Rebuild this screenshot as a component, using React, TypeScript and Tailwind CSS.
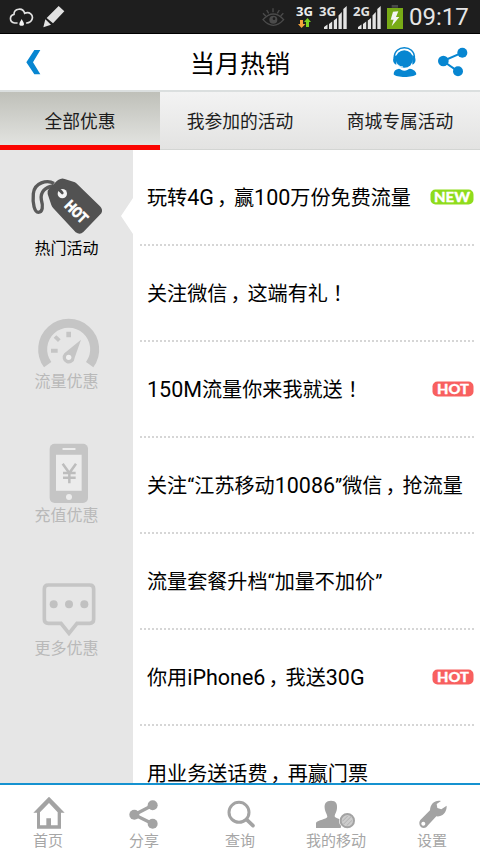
import React from "react";

const tabs = ["全部优惠", "我参加的活动", "商城专属活动"];

const offers = [
  { title: "玩转4G，赢100万份免费流量", tag: "NEW" },
  { title: "关注微信，这端有礼！" },
  { title: "150M流量你来我就送！", tag: "HOT" },
  { title: "关注“江苏移动10086”微信，抢流量" },
  { title: "流量套餐升档“加量不加价”" },
  { title: "你用iPhone6，我送30G", tag: "HOT" },
  { title: "用业务送话费，再赢门票" },
];

// Full-width punctuation sits near the middle of its cell, latin runs are a bit larger
function OfferTitle({ text }: { text: string }) {
  return (
    <span className="whitespace-nowrap text-[20.1px] leading-5 text-black">
      {text.split(/([，！]|[A-Za-z0-9]+)/).map((part, i) => {
        if (part === "，") {
          return <span key={i} className="-mr-[3px] pl-[3px]">{part}</span>;
        }
        if (part === "！") {
          return <span key={i} className="pl-[5px]">{part}</span>;
        }
        if (/^[A-Za-z0-9]+$/.test(part)) {
          return <span key={i} className="text-[21.5px] leading-5">{part}</span>;
        }
        return part;
      })}
    </span>
  );
}

function Badge({ tag }: { tag: string }) {
  const isNew = tag === "NEW";
  return (
    <svg
      width={isNew ? 44 : 42}
      height="16"
      viewBox={isNew ? "0 0 44 16" : "0 0 42 16"}
      className="absolute right-0 top-[39px]"
    >
      <rect x="0.5" y="0.5" width={isNew ? 43 : 41} height="15" rx="5" fill={isNew ? "#8fdc1c" : "#f8605f"} />
      <text
        x={isNew ? 22 : 21}
        y="12.500"
        textAnchor="middle"
        textLength={isNew ? 36 : 32}
        lengthAdjust="spacingAndGlyphs"
        fontFamily="Lato, sans-serif"
        fontWeight="900"
        fontSize="13"
        fill="#fff"
        stroke="#fff"
        strokeWidth="0.300"
        strokeLinejoin="round"
      >
        {tag}
      </text>
    </svg>
  );
}

function Signal({ label }: { label: string }) {
  return (
    <svg width="29" height="26" viewBox="0 0 29 26" className="ml-[5px] mt-[3px]">
      <g fill="#e4e4e4">
        <path d="M5 26v-2l3.500-2.500V26zM10 26v-5l3.200-2.500V26zM14.800 26v-8.500l3.200-2.500V26zM19.500 26V12.500L22.800 9V26zM24.300 26V6l3.400-3V26z" />
      </g>
      <text
        x="0"
        y="13"
        fontFamily="Open Sans, sans-serif"
        fontWeight="700"
        fontSize="12.500"
        fill="#e2e2e2"
        stroke="#1e1e1e"
        strokeWidth="1.500"
        paintOrder="stroke"
        textLength="17"
        lengthAdjust="spacingAndGlyphs"
      >
        {label}
      </text>
    </svg>
  );
}

function StatusBar() {
  return (
    <div className="flex h-[34px] items-start border-b border-black bg-[#1e1e1e]">
      <svg width="25" height="20" viewBox="27 21 75 60" className="ml-[9px] mt-[7px]">
        <path
          d="M51 69H44C27 67 28 46 42 43C42 25 69 21 74 40C88 33 101 45 96 58C93 66 88 68 80 69"
          fill="none"
          stroke="#e2e2e2"
          strokeWidth="5"
          strokeLinecap="round"
        />
        <path d="M65 57C62 64 58 67 58 73C58 79 72 79 72 73C72 67 68 64 65 57Z" fill="#f2f2f2" />
      </svg>
      <svg width="22" height="22" viewBox="129 18 66 66" className="ml-[9px] mt-[6px]">
        <path d="M176 18L193 34L159 70L140 54ZM136 58L153 74L130 82Z" fill="#e2e2e2" />
      </svg>
      <div className="flex-1" />
      <svg width="23" height="20" viewBox="63 24 69 60" className="mr-[2px] mt-[8px]">
        <g fill="none" stroke="#4b4b4b" strokeWidth="4">
          <path d="M66 59Q97 25 128 59Q97 93 66 59Z" />
          <path d="M96 25v12M77 30l6 10M115 30l-6 10M66 40l8 8M127 40l-8 8" />
        </g>
        <circle cx="97" cy="59" r="12" fill="#4b4b4b" />
        <circle cx="99" cy="56" r="4" fill="#1e1e1e" />
      </svg>
      <svg width="18" height="26" viewBox="0 0 18 26" className="ml-[9px] mt-[3px]">
        <text x="0" y="13" fontFamily="Open Sans, sans-serif" fontWeight="700" fontSize="12.500" fill="#eee" textLength="17" lengthAdjust="spacingAndGlyphs">
          3G
        </text>
        <path d="M4 17h3v4h2.500L5.500 25L2 21h2z" fill="#f5a33a" />
        <path d="M10 24h3v-5h2L11.500 15L8 19h2z" fill="#7ed321" />
      </svg>
      <Signal label="3G" />
      <Signal label="2G" />
      <svg width="18" height="25" viewBox="438 15 54 75" className="ml-[4px] mt-[5px]">
        <path d="M455 15h19v8h-19z" fill="#484848" />
        <path d="M441 24h48v63h-48z" fill="#78ab16" />
        <path d="M459 35l16-1-7 17h10L455 79l6-20h-9z" fill="#f4f4f4" />
      </svg>
      <span className="ml-[5px] mr-[11px] mt-[3px] w-[60px] whitespace-nowrap font-[Roboto,sans-serif] text-[24px] leading-7 text-[#e6e6e6]">
        09:17
      </span>
    </div>
  );
}

function Header() {
  return (
    <div className="grid h-[58px] grid-cols-[1fr_auto_1fr] items-center border-b-2 border-[#dbdfdf] bg-white">
      <div className="flex pl-[26px]">
        <svg width="15" height="25" viewBox="78 150 45 75">
          <path d="M103 150h18L99 187l22 36h-18L79 187z" fill="#0786d1" />
        </svg>
      </div>
      <h1 className="mt-1.5 text-[25px] leading-8 text-black">当月热销</h1>
      <div className="flex items-center justify-end pr-[12px]">
        <svg width="25" height="31" viewBox="456 141 75 93" className="mr-[21px]">
          <path d="M463 174C461 133 525 133 523 174" fill="none" stroke="#0786d1" strokeWidth="4.500" />
          <circle cx="493" cy="177" r="26" fill="#0786d1" />
          <path d="M469 166C456 169 456 191 469 194ZM517 166C530 169 530 191 517 194Z" fill="#0786d1" />
          <path d="M477 206C483 207 486 212 493 212C500 212 504 207 509 206C522 208 529 215 529 223C519 234 469 234 461 223C461 213 466 208 477 206Z" fill="#0786d1" />
          <path d="M473 194Q480 202 489 201" fill="none" stroke="#fff" strokeWidth="3" />
        </svg>
        <svg width="30" height="30" viewBox="594 144 90 90">
          <path d="M667 161L609 186L654 217" fill="none" stroke="#0786d1" strokeWidth="6" />
          <g fill="#0786d1">
            <circle cx="667" cy="161" r="15" />
            <circle cx="610" cy="186" r="16" />
            <circle cx="654" cy="217" r="15" />
          </g>
        </svg>
      </div>
    </div>
  );
}

function TabBar() {
  return (
    <div className="grid h-[58px] grid-cols-3 text-[17.8px] text-[#1c1c1c]">
      {tabs.map((tab, i) => (
        <div
          key={tab}
          className={
            i === 0
              ? "flex items-center justify-center border-b-[5px] border-[#fb0500] bg-linear-to-b from-[#bfc0b9] to-[#e2e3e0] pt-2"
              : "flex items-center justify-center border-b border-[#d3d5d3] bg-linear-to-b from-[#f3f3f3] to-[#e3e3e2] pt-1"
          }
        >
          {tab}
        </div>
      ))}
    </div>
  );
}

function HotTagIcon() {
  return (
    <svg width="77" height="62" viewBox="84 42 231 186">
      <path d="M162 70C141 58 103 68 100 101C97 132 104 157 115 157C128 157 130 139 124 119C120 96 137 80 160 78" fill="none" stroke="#5a5a5a" strokeWidth="10" />
      <path
        d="M181 57Q187 54 194 57L220 65Q225 66 229 70L300 139Q310 149 304 160L250 216Q240 226 227 217L160 145Q156 141 154 135L143 102Q140 94 146 88L168 65Q174 59 181 57Z"
        fill="#525252"
      />
      <circle cx="187" cy="101" r="14" fill="#f4f4f4" />
      <path d="M166 86Q180 88 187 99" fill="none" stroke="#525252" strokeWidth="8" strokeLinecap="round" />
      <text
        transform="translate(205 126) rotate(45)"
        x="0"
        y="19"
        fontFamily="Roboto, sans-serif"
        fontWeight="700"
        fontSize="44"
        fill="#fff"
        stroke="#fff"
        strokeWidth="2"
        textLength="76"
        lengthAdjust="spacingAndGlyphs"
      >
        HOT
      </text>
    </svg>
  );
}

function GaugeIcon() {
  return (
    <svg width="77" height="62" viewBox="84 22 231 186">
      <path d="M143 195A78 78 0 1 1 269 195" fill="none" stroke="#c5c5c5" strokeWidth="27" />
      <path d="M199 96h14v17h-14zM153 147h20v12h-20zM169 107l13 12-8 8-13-13z" fill="#c5c5c5" />
      <path d="M243 120L224 174A18 18 0 1 1 193 161Z" fill="#c5c5c5" />
      <circle cx="206" cy="173" r="8" fill="#efefef" />
    </svg>
  );
}

function PhoneIcon() {
  return (
    <svg width="77" height="62" viewBox="84 32 231 186">
      <rect x="149" y="40" width="115" height="178" rx="15" fill="#c5c5c5" />
      <path d="M168 73h77v108h-77z" fill="#ececec" />
      <path d="M190 56h34" stroke="#ececec" strokeWidth="6" strokeLinecap="round" />
      <circle cx="207" cy="200" r="9" fill="#ececec" />
      <path d="M188 100l20 28 20-28M189 128h38M189 142h38M208 128v31" fill="none" stroke="#bdbdbd" strokeWidth="7.500" />
    </svg>
  );
}

function BubbleIcon() {
  return (
    <svg width="77" height="62" viewBox="84 12 231 186">
      <path d="M145 45H269Q281 45 281 57V148Q281 160 269 160H231L207 190L183 160H145Q133 160 133 148V57Q133 45 145 45Z" fill="none" stroke="#c5c5c5" strokeWidth="11" />
      <g fill="#c1c1c1">
        <circle cx="161" cy="103" r="12" />
        <circle cx="207" cy="103" r="12" />
        <circle cx="253" cy="103" r="12" />
      </g>
    </svg>
  );
}

const categories = [
  { label: "热门活动", icon: <HotTagIcon />, active: true },
  { label: "流量优惠", icon: <GaugeIcon /> },
  { label: "充值优惠", icon: <PhoneIcon /> },
  { label: "更多优惠", icon: <BubbleIcon /> },
];

const navItems = [
  {
    label: "首页",
    icon: (
      <svg width="48" height="33" viewBox="72 138 144 99">
        <path fillRule="evenodd" d="M147 140L194 188H183V236H111V188H100ZM147 159L120 187V226H139V205H153V226H173V187Z" fill="#a3a3a3" />
      </svg>
    ),
  },
  {
    label: "分享",
    icon: (
      <svg width="48" height="33" viewBox="360 138 144 99">
        <path d="M458 166L403 194L458 221" fill="none" stroke="#a3a3a3" strokeWidth="10" />
        <g fill="#a3a3a3">
          <circle cx="458" cy="166" r="15" />
          <circle cx="403" cy="194" r="15" />
          <circle cx="458" cy="221" r="15" />
        </g>
      </svg>
    ),
  },
  {
    label: "查询",
    icon: (
      <svg width="48" height="33" viewBox="-72 138 144 99">
        <circle cx="-3" cy="187" r="30" fill="none" stroke="#a3a3a3" strokeWidth="9" />
        <path d="M20 209L39 227" stroke="#a3a3a3" strokeWidth="11" strokeLinecap="round" />
      </svg>
    ),
  },
  {
    label: "我的移动",
    icon: (
      <svg width="48" height="33" viewBox="216 138 144 99">
        <path d="M273 152C289 152 292 162 291 174C290 187 285 190 284 199C285 205 301 206 307 213L302 234H228V218C234 210 259 208 262 201C262 192 255 187 254 174C253 161 258 152 273 152Z" fill="#a3a3a3" />
        <circle cx="322" cy="212" r="25" fill="#fff" />
        <circle cx="322" cy="212" r="20" fill="#ccc" stroke="#a3a3a3" strokeWidth="6" />
        <path d="M307 214l16-16M310 223l25-25M320 227l16-16" stroke="#b0b0b0" strokeWidth="3" />
      </svg>
    ),
  },
  {
    label: "设置",
    icon: (
      <svg width="48" height="33" viewBox="504 138 144 99">
        <path
          fillRule="evenodd"
          d="M603 153C586 149 571 160 570 181L541 210C534 219 540 234 551 234C557 234 561 231 564 226L589 199C604 201 621 189 620 167L604 178L592 174L590 162ZM550 215A6 6 0 1 1 549.900 215Z"
          fill="#a3a3a3"
        />
      </svg>
    ),
  },
];

export default function App() {
  return (
    <div lang="zh-CN" className="flex h-[853px] w-[480px] flex-col overflow-hidden bg-white font-[Roboto,'Noto_Sans_CJK_SC',sans-serif]">
      <StatusBar />
      <Header />
      <TabBar />

      <div className="flex min-h-0 flex-1 overflow-hidden">
        {/* Category sidebar */}
        <aside className="w-[133px] shrink-0 bg-[#e6e6e6]">
          {categories.map((c) => (
            <div key={c.label} className="relative flex h-[133.3px] flex-col items-center pt-6">
              {c.icon}
              <span className={c.active ? "mt-[3px] text-[16px] leading-5 text-black" : "mt-[3px] text-[16px] leading-5 text-[#b9b9b9]"}>
                {c.label}
              </span>
              {c.active && (
                <svg width="12" height="36" viewBox="0 0 12 36" className="absolute right-0 top-12">
                  <path d="M12 0V36L0 18Z" fill="#fff" />
                </svg>
              )}
            </div>
          ))}
        </aside>

        {/* Offer list */}
        <main className="min-w-0 flex-1 pl-[7px] pr-[6px]">
          {offers.map((o) => (
            <div key={o.title} className="relative flex h-24 items-center pb-px pl-[7px]">
              <OfferTitle text={o.title} />
              {o.tag && <Badge tag={o.tag} />}
              <svg width="334" height="2" className="absolute bottom-0 left-0">
                <path d="M0 1H334" stroke="#d6d6d6" strokeWidth="2" strokeDasharray="2 2" />
              </svg>
            </div>
          ))}
        </main>
      </div>

      <nav className="grid h-[70px] shrink-0 grid-cols-5 border-t-2 border-[#1592d0] bg-white">
        {navItems.map((n) => (
          <div key={n.label} className="flex flex-col items-center pt-[11px]">
            {n.icon}
            <span className="mt-0.5 text-[15px] leading-5 text-[#a6a6a6]">{n.label}</span>
          </div>
        ))}
      </nav>
    </div>
  );
}
